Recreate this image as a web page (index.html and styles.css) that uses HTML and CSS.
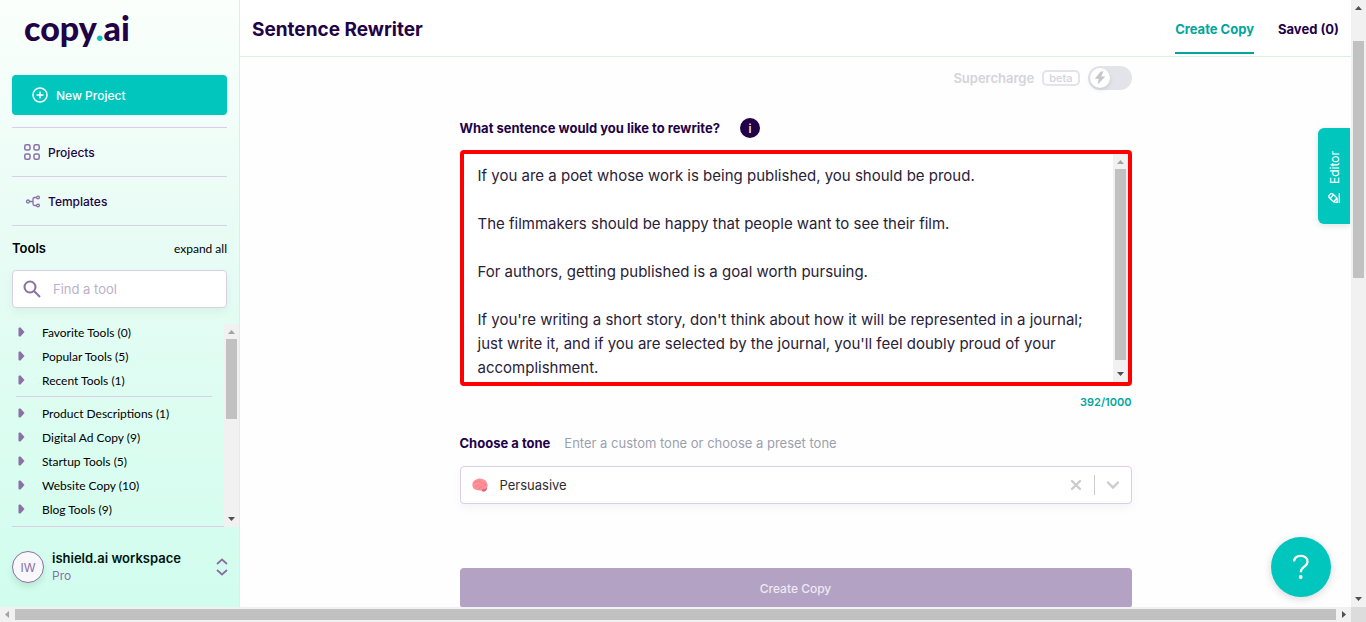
FILE: index.html
```html
<!DOCTYPE html>
<html lang="en">
<head>
<meta charset="utf-8">
<title>Sentence Rewriter</title>
<link rel="stylesheet" href="styles.css">
</head>
<body>
<svg class="defs" aria-hidden="true">
  <symbol id="up" viewBox="0 0 15 15"><path d="M4 10h7L7.500 6z"/></symbol>
  <symbol id="down" viewBox="0 0 15 15"><path d="M4 5h7l-3.500 4z"/></symbol>
  <symbol id="left" viewBox="0 0 15 15"><path d="M9 4v7L5 7.500z"/></symbol>
  <symbol id="right" viewBox="0 0 15 15"><path d="M6 4v7l4-3.500z"/></symbol>
  <symbol id="caret" viewBox="0 0 7 10"><path d="M.5 1.500Q.5.500 1.500.500h1L6.500 5l-4 4.500h-1Q.5 9.500.5 8.500z"/></symbol>
</svg>
<div class="app">
  <aside class="sidebar">
    <div class="logo">copy<span>.</span>ai</div>
    <button class="new-project" type="button">
      <svg width="16" height="16" viewBox="0 0 16 16" fill="none" stroke="currentColor" stroke-width="1.500"><circle cx="8" cy="8" r="7"/><path d="M8 4.500v7M4.500 8h7"/></svg>
      New Project
    </button>
    <nav class="links">
      <a href="#"><svg width="16" height="16" viewBox="0 0 16 16" fill="none" stroke="currentColor" stroke-width="1.500"><rect x=".8" y=".8" width="5.200" height="5.200" rx="1.500"/><rect x="10" y=".8" width="5.200" height="5.200" rx="1.500"/><rect x=".8" y="10" width="5.200" height="5.200" rx="1.500"/><rect x="10" y="10" width="5.200" height="5.200" rx="1.500"/></svg>Projects</a>
      <a href="#"><svg width="16" height="16" viewBox="0 0 16 16" fill="none" stroke="currentColor" stroke-width="1.300"><circle cx="4" cy="8.500" r="1.500"/><circle cx="14" cy="4.500" r="1.400"/><circle cx="14" cy="12.500" r="1.400"/><path d="M5.500 8.500h3.500M12.500 4.500h-2Q9 4.500 9 6v5q0 1.500 1.500 1.500h2"/></svg>Templates</a>
    </nav>
    <div class="tools-head"><h2>Tools</h2><button type="button">expand all</button></div>
    <label class="search">
      <svg width="18" height="18" viewBox="0 0 18 18" fill="none" stroke="currentColor" stroke-width="2"><circle cx="7" cy="7" r="5.500"/><path d="M11 11l6 6"/></svg>
      <input type="text" placeholder="Find a tool" aria-label="Find a tool">
    </label>
    <div class="tools">
      <div class="tool-list">
        <button type="button"><svg><use href="#caret"/></svg>Favorite Tools (0)</button>
        <button type="button"><svg><use href="#caret"/></svg>Popular Tools (5)</button>
        <button type="button"><svg><use href="#caret"/></svg>Recent Tools (1)</button>
        <hr>
        <button type="button"><svg><use href="#caret"/></svg>Product Descriptions (1)</button>
        <button type="button"><svg><use href="#caret"/></svg>Digital Ad Copy (9)</button>
        <button type="button"><svg><use href="#caret"/></svg>Startup Tools (5)</button>
        <button type="button"><svg><use href="#caret"/></svg>Website Copy (10)</button>
        <button type="button"><svg><use href="#caret"/></svg>Blog Tools (9)</button>
      </div>
      <div class="bar tools-bar"><svg class="dim"><use href="#up"/></svg><div class="track"><i class="thumb"></i></div><svg><use href="#down"/></svg></div>
    </div>
    <div class="workspace">
      <span class="avatar">IW</span>
      <div class="who"><strong>ishield.ai workspace</strong><span>Pro</span></div>
      <svg width="12" height="18" viewBox="0 0 12 18" fill="none" stroke="currentColor" stroke-width="1.800"><path d="M1 6l5-4.500L11 6M1 12l5 4.500 5-4.500"/></svg>
    </div>
  </aside>

  <main class="main">
    <header class="header">
      <h1>Sentence Rewriter</h1>
      <nav><a class="active" href="#">Create Copy</a><a href="#">Saved (0)</a></nav>
    </header>
    <form class="form">
      <label class="super">
        <span>Supercharge</span><small>beta</small>
        <span class="switch"><input type="checkbox"><svg width="12" height="14" viewBox="0 0 12 14"><path d="M6.800.5L.8 7.800h4L3.600 13.500l7.800-8H7.200L9.400.5z"/></svg></span>
      </label>
      <div class="question"><label for="sentence">What sentence would you like to rewrite?</label><button type="button" aria-label="Information">i</button></div>
      <div class="editor-box">
        <textarea id="sentence">If you are a poet whose work is being published, you should be proud.

The filmmakers should be happy that people want to see their film.

For authors, getting published is a goal worth pursuing.

If you're writing a short story, don't think about how it will be represented in a journal; just write it, and if you are selected by the journal, you'll feel doubly proud of your accomplishment.</textarea>
        <div class="bar text-bar"><svg class="dim"><use href="#up"/></svg><div class="track"><i class="thumb"></i></div><svg><use href="#down"/></svg></div>
      </div>
      <div class="count">392/1000</div>
      <div class="tone-head"><label for="tone">Choose a tone</label><span>Enter a custom tone or choose a preset tone</span></div>
      <div class="tone">
        <svg width="16" height="14" viewBox="0 0 16 14"><path d="M.3 7C.3 4 2 2 4.300 1.500 6 .2 9 .2 10.300 1c2.400.2 4.200 1.900 4.500 3.800.9 1.300 1.100 3.400.2 4.700.2 1.500-.6 2.800-1.600 3.500-1.200.9-3 .4-3.700-.6-1.400 0-2.500.2-4-.1C2.800 12 .3 10 .3 7z" fill="#ff9298"/><path d="M9.500 12.200c1-1.500 3.200-.5 5.200-2.400.4 1.600-.6 2.800-1.300 3.300-1.500.9-3.200.3-3.900-.9z" fill="#dd6574"/><path d="M2.500 5c2-.5 1.200-1.800 3-2.100M7 2.700c-.3 2 2.800.6 2.900 2.700M3 8.500c1.900.8 1.700-1.600 3.600-1M7.500 10.500c-.2-2 2.500-.8 2.900-2.800M12 4c-.7 1.900 1.800 1.700 1.300 3.800" fill="none" stroke="#ec6c78" stroke-width=".7"/></svg>
        <select id="tone"><option>Persuasive</option></select>
        <button type="button" aria-label="Clear tone"><svg width="12" height="12" viewBox="0 0 12 12"><path d="M2 2l8 8M10 2l-8 8"/></svg></button>
        <span class="divider"></span>
        <svg class="chevron" width="14" height="10" viewBox="0 0 14 10"><path d="M2 2.500l5 5 5-5"/></svg>
      </div>
      <button class="submit" type="button">Create Copy</button>
    </form>
    <button class="editor-tab" type="button">
      <svg width="12" height="12" viewBox="0 0 12 12" fill="none" stroke="currentColor" stroke-width="1.300"><path d="M11.300 1v10M9.300 10.300l-3.600-.5L1.500 6Q.2 4.300 1.600 2.700T5 2l4 4 .3 4.300zM2.200 6.400l3.300-3.600M5.700 9.800L9 6"/></svg>
      <span>Editor</span>
    </button>
    <button class="help" type="button" aria-label="Help"><svg width="18" height="26" viewBox="0 0 18 26" fill="none" stroke="currentColor" stroke-width="2.200"><path d="M2 7.500C2.300 3.600 5 1.800 8.700 1.800c4 0 6.800 2.400 6.800 5.900 0 5.200-6.700 4.800-6.700 10.500"/><circle cx="8.700" cy="23" r="1.900" fill="currentColor" stroke="none"/></svg></button>
  </main>

  <div class="bar page-bar"><svg><use href="#up"/></svg><div class="track"><i class="thumb"></i></div><svg><use href="#down"/></svg></div>
  <div class="bar bottom-bar"><svg class="dim"><use href="#left"/></svg><div class="track"><i class="thumb"></i></div><svg><use href="#right"/></svg></div>
  <div class="corner"></div>
</div>
</body>
</html>
```
FILE: styles.css
```css
* { box-sizing: border-box; }
body {
  margin: 0;
  font-family: Inter, "Liberation Sans", sans-serif;
  font-size: 12px;
  color: #220247;
}
button, input, select, textarea { font: inherit; color: inherit; border: 0; background: none; padding: 0; margin: 0; outline: 0; }
a { color: inherit; text-decoration: none; }
h1, h2 { margin: 0; }
svg { flex: none; }
.defs { display: none; }

.app {
  display: grid;
  grid-template: minmax(0, 1fr) 15px / 240px minmax(0, 1fr) 15px;
  height: 100vh;
}

/* Sidebar */
.sidebar {
  display: flex;
  flex-direction: column;
  min-height: 0;
  padding-left: 12px;
  border-right: 1px solid #d9f0e3;
  background: linear-gradient(#fafffb, #f2fef9 18%, #e9fcf5 36%, #dcfdf1 70%, #d1fdee);
}
.logo {
  padding: 6px 0 0 12px;
  height: 75px;
  font-family: Lato, sans-serif;
  font-size: 34px;
  line-height: 44px;
  font-weight: 900;
}
.logo span { color: #00c6be; }
.new-project {
  display: flex;
  align-items: center;
  gap: 8px;
  height: 40px;
  margin-right: 12px;
  padding-left: 20px;
  border-radius: 4px;
  background: #00c6be;
  color: #fff;
  font-weight: 500;
}
.links { margin: 12px 12px 0 0; border-bottom: 1px solid #dacfe6; }
.links a {
  display: flex;
  align-items: center;
  gap: 8px;
  height: 49px;
  padding-left: 12px;
  border-top: 1px solid #dacfe6;
  font-weight: 500;
}
.links svg, .search svg, .workspace svg { color: #8a70a5; }
.tools-head {
  display: flex;
  justify-content: space-between;
  align-items: center;
  height: 44px;
  margin-right: 12px;
  color: #000;
}
.tools-head h2 { font-size: 13px; font-weight: 600; }
.search {
  display: flex;
  align-items: center;
  gap: 12px;
  height: 38px;
  margin-right: 12px;
  padding-left: 10px;
  border: 1px solid #dacfe6;
  border-radius: 4px;
  background: #fff;
  box-shadow: 0 4px 8px #20604010;
}
.search input { flex: 1; min-width: 0; font-size: 13px; }
.search input::placeholder { color: #bcb0cc; opacity: 1; }
.tools { display: flex; flex: 1; min-height: 0; margin-top: 12px; }
.tool-list { flex: 1; overflow: hidden; border-bottom: 1px solid #dacfe6; }
.tool-list button {
  display: flex;
  align-items: center;
  gap: 17px;
  height: 24px;
  padding-left: 6px;
  color: #000;
}
.tool-list button, .tools-head button { font-family: Lato, sans-serif; font-size: 12px; }
.tool-list svg { width: 7px; height: 10px; fill: #8a70a5; }
.tool-list hr { height: 1px; margin: 4px 12px 4px 4px; border: 0; background: #dacfe6; }
.tools-bar { margin-top: 4px; }
.workspace {
  display: flex;
  align-items: center;
  gap: 8px;
  height: 80px;
  padding-right: 11px;
}
.avatar {
  display: grid;
  place-items: center;
  width: 32px;
  height: 32px;
  border: 1px solid #8a70a5;
  border-radius: 50%;
  background: #f8f7fa;
  color: #8a70a5;
  box-shadow: 0 4px 6px #20604022;
}
.who { display: grid; flex: 1; line-height: 18px; color: #8a70a5; }
.who strong { font-size: 13px; font-weight: 600; color: #00140e; }

/* Main column */
.main { position: relative; min-height: 0; overflow: hidden; background: #fefefe; }
.header {
  display: flex;
  justify-content: space-between;
  height: 57px;
  padding: 0 12px;
  border-bottom: 1px solid #d7f2e2;
  background: #fff;
  line-height: 59px;
}
.header h1 { font-size: 19px; font-weight: 700; }
.header nav { display: flex; gap: 24px; height: 54px; font-size: 13px; font-weight: 700; }
.header .active { color: #00a69d; border-bottom: 2px solid #00a69d; }
.form { display: flex; flex-direction: column; max-width: 672px; margin: 0 auto; }
.super {
  display: flex;
  align-items: center;
  justify-content: flex-end;
  gap: 8px;
  margin-top: 9px;
  height: 24px;
  font-size: 13px;
  font-weight: 600;
  color: #d3d4dc;
}
.super small { padding: 0 5px; border: 2px solid #e3e4ea; border-radius: 5px; font-size: 11px; line-height: 12px; font-weight: 500; }
.switch { display: flex; position: relative; }
.switch input { appearance: none; width: 44px; height: 24px; border-radius: 12px; background: #e3e4ea; }
.switch input::before {
  content: "";
  display: block;
  width: 20px;
  height: 20px;
  margin: 2px;
  border-radius: 50%;
  background: #fff;
  box-shadow: 0 2px 4px #00403022;
}
.switch svg { position: absolute; left: 6px; top: 5px; fill: #c6c6c8; }
.question { display: flex; align-items: center; gap: 20px; height: 20px; margin-top: 28px; font-size: 13px; font-weight: 700; }
.question button { width: 20px; height: 20px; border-radius: 50%; background: #220247; color: #fff; font-size: 12px; font-weight: 500; }
.editor-box {
  display: flex;
  height: 236px;
  margin-top: 12px;
  border: 4px solid #fe0000;
  border-radius: 4px;
  background: #fff;
}
.editor-box textarea {
  flex: 1;
  min-width: 0;
  padding: 10px 14px 0;
  resize: none;
  overflow: hidden;
  font-size: 15px;
  line-height: 24px;
  color: #2a2138;
}
.count { margin-top: 8px; text-align: right; font-size: 11px; line-height: 16px; font-weight: 600; color: #00a69d; }
.tone-head { display: flex; gap: 14px; margin-top: 23px; font-size: 13px; line-height: 20px; }
.tone-head label { font-weight: 700; }
.tone-head span { color: #9ca0ae; }
.tone {
  display: flex;
  align-items: center;
  height: 38px;
  margin-top: 13px;
  padding: 0 11px;
  border: 1px solid #dacfe6;
  border-radius: 4px;
  background: #fff;
  box-shadow: 0 4px 8px #0040300c;
}
.tone select { appearance: none; flex: 1; margin-left: 12px; font-size: 13px; color: #2d2d30; }
.tone button { display: flex; margin-right: 12px; }
.tone button svg, .chevron { fill: none; stroke: #ccc; stroke-width: 2.4; stroke-linecap: round; }
.divider { width: 1px; height: 20px; margin-right: 11px; background: #ccc; }
.submit { height: 40px; margin-top: 64px; border-radius: 4px; background: #b3a2c4; color: #eee9f2; font-weight: 500; }
.editor-tab {
  position: absolute;
  top: 128px;
  right: 1px;
  display: flex;
  align-items: center;
  gap: 8px;
  width: 32px;
  height: 96px;
  padding-top: 20px;
  border-radius: 0 6px 6px 0;
  background: #00c6be;
  color: #fff;
  writing-mode: vertical-rl;
  transform: rotate(180deg);
  box-shadow: 0 -2px 6px #00403022;
}
.editor-tab svg { transform: rotate(180deg); }
.help {
  position: absolute;
  right: 20px;
  bottom: 10px;
  display: grid;
  place-items: center;
  width: 60px;
  height: 60px;
  border-radius: 50%;
  background: #00c6be;
  color: #fff;
  box-shadow: 0 2px 8px #00000028;
}

/* Scroll bars */
.bar { display: flex; flex-direction: column; flex: none; width: 15px; background: #f1f1f1; }
.bar svg { width: 15px; height: 15px; fill: #505050; }
.bar .dim { fill: #a3a3a3; }
.track { flex: 1; padding: 0 2px; min-height: 0; }
.thumb { display: block; height: 100%; background: #c1c1c1; }
.tools-bar .thumb { height: 46%; }
.text-bar .track { padding-bottom: 7px; }
.page-bar .track { padding-top: 26px; }
.page-bar .thumb { height: 43%; }
.page-bar { grid-area: 1 / 3; }
.bottom-bar { grid-area: 2 / 1 / 3 / 3; flex-direction: row; width: auto; }
.bottom-bar .track { padding: 2px 0; }
.corner { background: #dcdcdc; }
```
